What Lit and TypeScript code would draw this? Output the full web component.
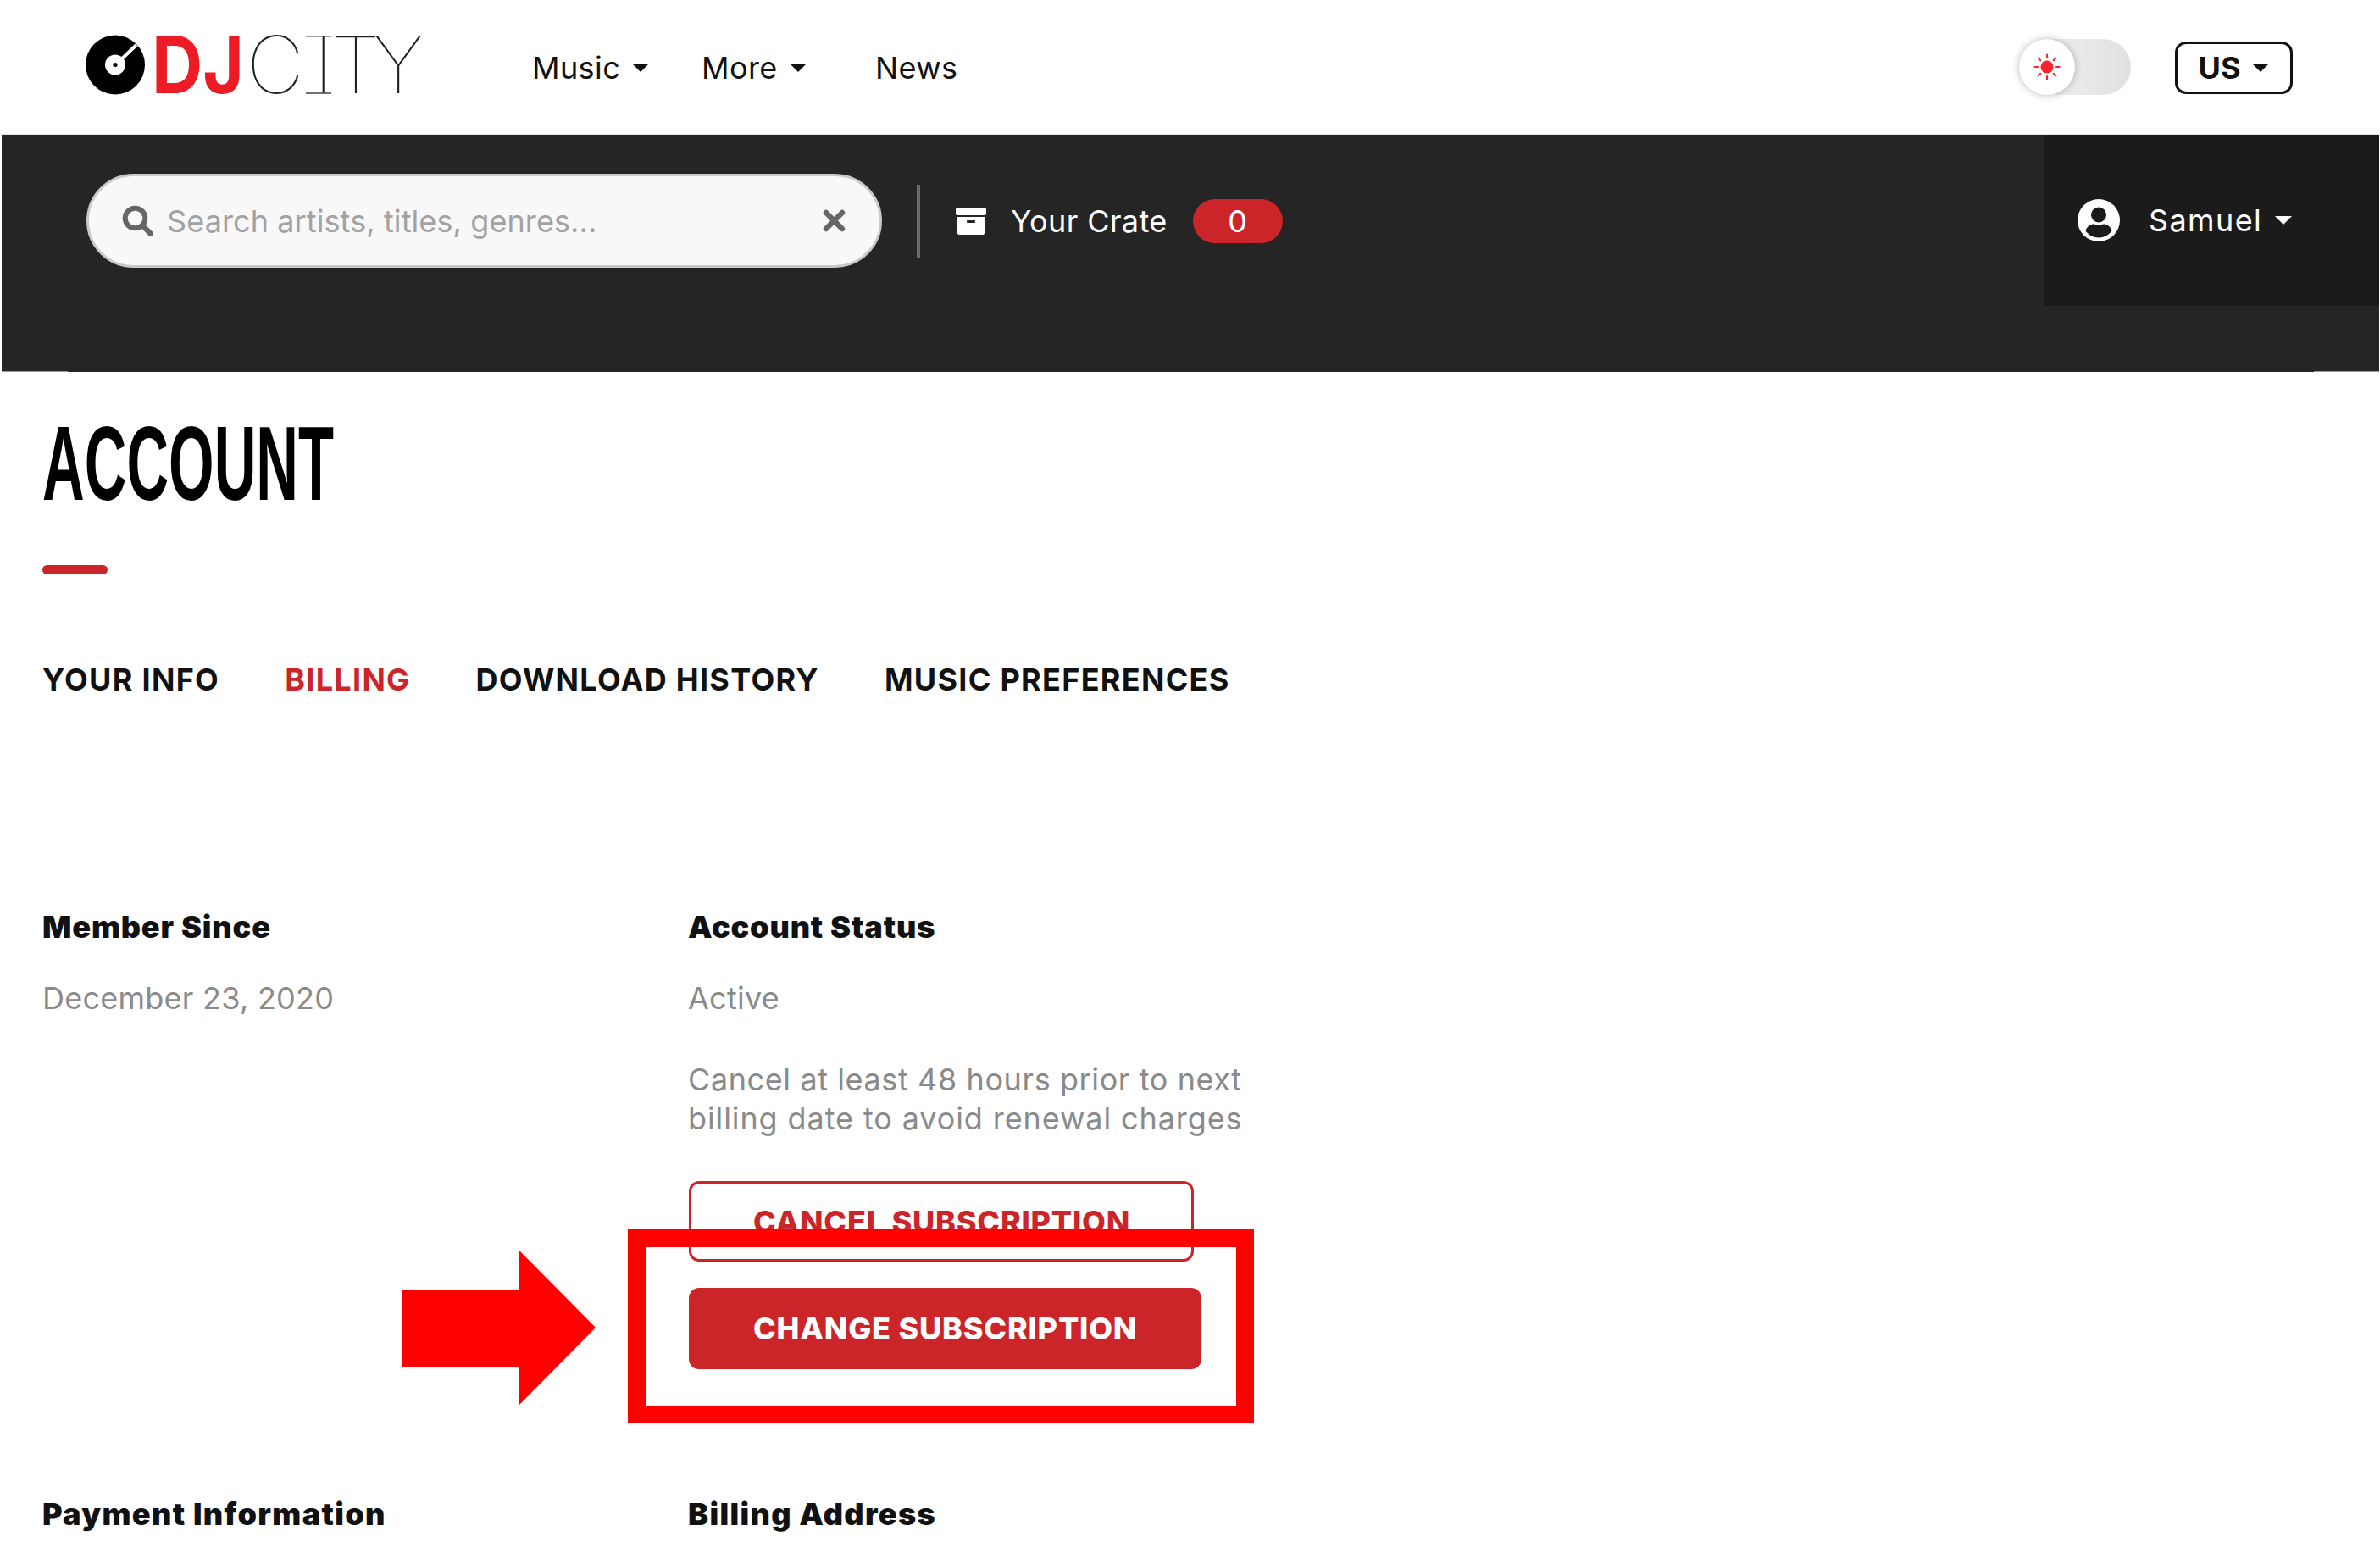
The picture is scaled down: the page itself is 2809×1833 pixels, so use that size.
import { LitElement, html, css } from "lit";
import { customElement } from "lit/decorators.js";

@customElement("app-root")
export class AppRoot extends LitElement {
  static styles = css`
    :host { display: block; position: relative; width: 2809px; height: 1833px; overflow: hidden; background: #fff; color: #111; font-family: Inter, "Liberation Sans", sans-serif; }
    .top { height: 158px; display: flex; align-items: center; padding-left: 101px; }
    .logo { width: 400px; height: 130px; display: block; margin-top: -4px; flex: none; }
    .nav { display: flex; align-items: center; margin-left: 127px; font-size: 36px; letter-spacing: 0.4px; margin-top: 2px; }
    .nav span { display: flex; align-items: center; white-space: nowrap; }
    .caret { display: inline-block; width: 0; height: 0; border-left: 10.5px solid transparent; border-right: 10.5px solid transparent; border-top: 10px solid currentColor; }
    .nav .music { width: 200px; gap: 14px; }
    .nav .more { width: 205px; gap: 14px; }
    .toggle { margin-left: auto; width: 132px; height: 66px; border-radius: 33px; background: linear-gradient(90deg, #f4f4f4, #e6e6e6 70%, #e0e0e0); position: relative; flex: none; }
    .knob { width: 66px; height: 66px; border-radius: 50%; background: #fff; box-shadow: 0 0 10px rgba(0,0,0,.28); display: flex; align-items: center; justify-content: center; }
    .us { margin-left: 52px; margin-right: 103px; width: 139px; height: 62px; box-sizing: border-box; border: 3px solid #111; border-radius: 13px; display: flex; align-items: center; justify-content: center; gap: 14px; font-size: 36px; font-weight: 700; flex: none; position: relative; top: 1px; }
    .us .caret { border-left-width: 10px; border-right-width: 10px; }

    .bar { height: 281px; margin: 0 1px 0 2px; background: #252525; border-top: 1px solid #e2e2e2; box-sizing: border-box; display: flex; justify-content: space-between; align-items: flex-start; position: relative; }
    .bar::before, .bar::after { content: ""; position: absolute; bottom: 0; height: 1px; background: #9a9a9a; }
    .bar::before { left: 0; width: 78px; }
    .bar::after { right: 0; width: 77px; }
    .left { display: flex; align-items: center; padding: 46px 0 0 100px; }
    .search { width: 939px; height: 111px; box-sizing: border-box; border: 3px solid #c9c9c9; border-radius: 56px; background: #f8f8f8; display: flex; align-items: center; padding: 0 40px 0 39px; font-size: 36px; color: #a2a2a2; }
    .search .ph { margin-left: 16px; flex: 1; white-space: nowrap; letter-spacing: 0.1px; }
    .div { width: 4px; height: 86px; background: #6a6a6a; margin: 0 42px 0 41px; }
    .crate { display: flex; align-items: center; color: #fff; font-size: 36px; }
    .crate .t { margin-left: 29px; letter-spacing: 0.4px; white-space: nowrap; }
    .badge { margin-left: 30px; width: 106px; height: 52px; border-radius: 26px; background: #cc2529; color: #fff; display: flex; align-items: center; justify-content: center; }
    .user { width: 396px; height: 202px; background: #1b1b1b; color: #fff; display: flex; align-items: center; padding-left: 40px; box-sizing: border-box; font-size: 36px; }
    .user .n { margin-left: 34px; margin-right: 15px; letter-spacing: 1.4px; }

    .main { padding-left: 50px; }
    h1 { margin: 52px 0 0; font: 700 124px/112px "Liberation Sans", sans-serif; color: #000; transform: scaleX(.555); transform-origin: left; white-space: nowrap; }
    .rule { width: 77px; height: 11px; border-radius: 6px; background: #cc2529; margin-top: 64px; }
    .tabs { display: flex; gap: 77px; margin-top: 102px; font-size: 36px; font-weight: 700; letter-spacing: 1.3px; line-height: 44px; white-space: nowrap; }
    .tabs .on { color: #cc2529; }
    .row { display: flex; }
    .col1 { width: 761px; flex: none; }
    .col2 { flex: none; width: 700px; padding-left: 1px; box-sizing: border-box; }
    .row1 { margin-top: 248px; }
    .h { font-size: 36px; font-weight: 900; line-height: 44px; letter-spacing: 0.85px; white-space: nowrap; color: #111; }
    .row2 .h { letter-spacing: 1.35px; }
    .v { font-size: 36px; color: #8a8a8a; line-height: 46px; margin-top: 39px; white-space: nowrap; letter-spacing: 0.25px; }
    .note { font-size: 36px; color: #8a8a8a; line-height: 46px; margin-top: 50px; white-space: nowrap; letter-spacing: 0.6px; }
    .note .l2 { letter-spacing: 0.9px; }
    .btn { box-sizing: border-box; border-radius: 12px; display: flex; align-items: center; font-size: 36px; font-weight: 800; letter-spacing: 0.8px; white-space: nowrap; }
    .b1 { width: 596px; height: 95px; border: 3px solid #cc2529; color: #cc2529; margin-top: 51px; padding-left: 73px; margin-left: 1px; }
    .b2 { width: 605px; height: 96px; background: #cc2529; color: #fff; margin-top: 31px; padding-left: 76px; margin-left: 1px; }
    .row2 { margin-top: 149px; }

    .box { position: absolute; left: 741px; top: 1451px; width: 739px; height: 229px; box-sizing: border-box; border: 21px solid #ff0000; }
    .arrow { position: absolute; left: 474px; top: 1476px; width: 229px; height: 182px; display: block; }
  `;

  render() {
    return html`
      <div class="top">
        <svg class="logo" viewBox="101 10 400 130">
          <circle cx="136" cy="74.5" r="35" fill="#000"/>
          <line x1="138" y1="73" x2="161" y2="51" stroke="#fff" stroke-width="4"/>
          <circle cx="136" cy="74.5" r="12" fill="#fff"/>
          <circle cx="136" cy="74.5" r="2.6" fill="#000"/>
          <text x="179" y="108" textLength="109" lengthAdjust="spacingAndGlyphs" font-family="Inter" font-weight="700" font-size="94" fill="#ed1c24">DJ</text>
          <text x="291 370 391 440" y="108" font-family="Inter" font-weight="100" font-size="94" fill="#222">CITY</text>
          <path d="M361 40.700h30M361 108h30" stroke="#444" stroke-width="1.400"/>
        </svg>
        <div class="nav">
          <span class="music">Music <i class="caret"></i></span>
          <span class="more">More <i class="caret"></i></span>
          <span>News</span>
        </div>
        <div class="toggle"><div class="knob">
          <svg width="32" height="32" viewBox="0 0 32 32"><circle cx="16" cy="16" r="7.500" fill="#f8262c"/><g stroke="#f8262c" stroke-width="2.200" stroke-linecap="round"><path d="M16 1.500v3.500M16 27v3.500M1.500 16H5M27 16h3.500M5.800 5.800l2.400 2.400M23.800 23.800l2.400 2.400M5.800 26.200l2.400-2.400M23.800 8.200l2.400-2.400"/></g></svg>
        </div></div>
        <div class="us">US <i class="caret"></i></div>
      </div>

      <div class="bar">
        <div class="left">
          <div class="search">
            <svg width="37" height="37" viewBox="0 0 37 37"><circle cx="15.500" cy="15.500" r="11.800" fill="none" stroke="#666" stroke-width="6"/><path d="M24 24l10 10" stroke="#666" stroke-width="6.400" stroke-linecap="round"/></svg>
            <span class="ph">Search artists, titles, genres...</span>
            <svg width="27" height="27" viewBox="0 0 27 27"><path d="M4 4l19 19M23 4L4 23" stroke="#666" stroke-width="6.400" stroke-linecap="round"/></svg>
          </div>
          <div class="div"></div>
          <div class="crate">
            <svg width="36" height="32" viewBox="0 0 36 32"><rect x="0" y="0" width="36" height="9" rx="2" fill="#fff"/><path d="M2 11h32v19a2 2 0 0 1-2 2H4a2 2 0 0 1-2-2z" fill="#fff"/><rect x="13" y="15" width="10" height="3" rx="1" fill="#252525"/></svg>
            <span class="t">Your Crate</span>
            <span class="badge">0</span>
          </div>
        </div>
        <div class="user">
          <svg width="50" height="50" viewBox="0 0 50 50"><circle cx="25" cy="25" r="25" fill="#fff"/><circle cx="25" cy="18.500" r="9" fill="#1b1b1b"/><path d="M9.500 37.500c1.500-5.500 6-8 9.500-8 2.200 0 3.400 1 6 1s3.800-1 6-1c3.500 0 8 2.500 9.500 8-3.500 4.800-9.300 8-15.500 8s-12-3.200-15.500-8z" fill="#1b1b1b"/></svg>
          <span class="n">Samuel</span><i class="caret"></i>
        </div>
      </div>

      <div class="main">
        <h1>ACCOUNT</h1>
        <div class="rule"></div>
        <div class="tabs"><span>YOUR INFO</span><span class="on">BILLING</span><span>DOWNLOAD HISTORY</span><span>MUSIC PREFERENCES</span></div>
        <div class="row row1">
          <div class="col1"><div class="h">Member Since</div><div class="v">December 23, 2020</div></div>
          <div class="col2">
            <div class="h">Account Status</div>
            <div class="v">Active</div>
            <div class="note">Cancel at least 48 hours prior to next<br><span class="l2">billing date to avoid renewal charges</span></div>
            <div class="btn b1">CANCEL SUBSCRIPTION</div>
            <div class="btn b2">CHANGE SUBSCRIPTION</div>
          </div>
        </div>
        <div class="row row2">
          <div class="col1"><div class="h">Payment Information</div></div>
          <div class="col2"><div class="h">Billing Address</div></div>
        </div>
      </div>

      <div class="box"></div>
      <svg class="arrow" viewBox="0 0 229 182"><path d="M0 46h139V0l90 91-90 91v-45H0z" fill="#ff0000"/></svg>
    `;
  }
}
